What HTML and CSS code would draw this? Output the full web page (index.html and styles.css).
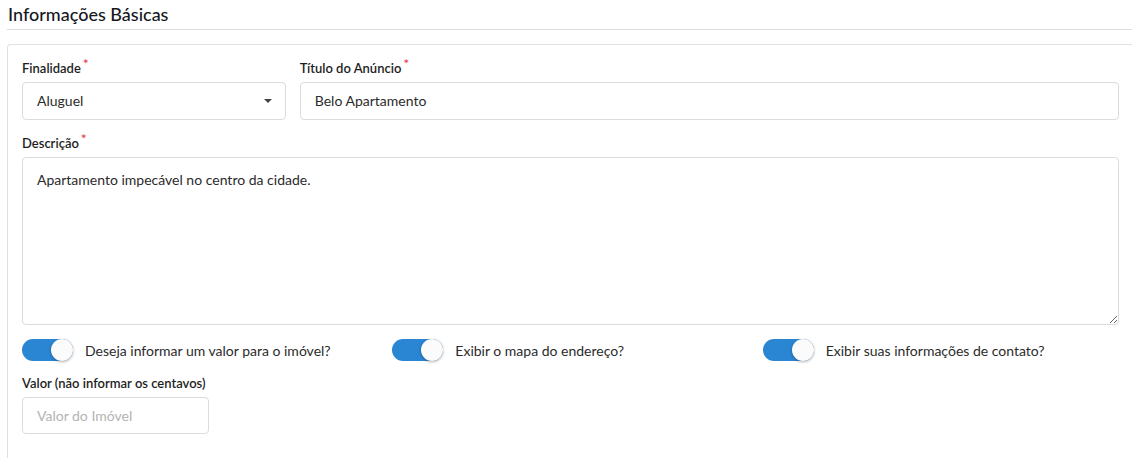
FILE: index.html
```html
<!DOCTYPE html>
<html lang="pt-BR">
<head>
<meta charset="utf-8">
<title>Informações Básicas</title>
<link rel="stylesheet" href="styles.css">
</head>
<body>
<div class="page">
  <h2 class="section-title">Informações Básicas</h2>
  <div class="card">
    <div class="row row-top">
      <div class="field">
        <label class="label">Finalidade<span class="req">*</span></label>
        <div class="control select">Aluguel<span class="caret"></span></div>
      </div>
      <div class="field">
        <label class="label">Título do Anúncio<span class="req">*</span></label>
        <div class="control">Belo Apartamento</div>
      </div>
    </div>
    <div class="field">
      <label class="label">Descrição<span class="req">*</span></label>
      <textarea class="control textarea" readonly>Apartamento impecável no centro da cidade.</textarea>
    </div>
    <div class="row row-toggles">
      <div class="toggle-item"><span class="switch"><span class="knob"></span></span><span class="toggle-text">Deseja informar um valor para o imóvel?</span></div>
      <div class="toggle-item"><span class="switch"><span class="knob"></span></span><span class="toggle-text">Exibir o mapa do endereço?</span></div>
      <div class="toggle-item"><span class="switch"><span class="knob"></span></span><span class="toggle-text">Exibir suas informações de contato?</span></div>
    </div>
    <div class="field field-last">
      <label class="label">Valor (não informar os centavos)</label>
      <div class="control small placeholder">Valor do Imóvel</div>
    </div>
  </div>
</div>
</body>
</html>
```

FILE: styles.css
```css
html, body {
  margin: 0;
  padding: 0;
  overflow: hidden;
  background: #fff;
}
body {
  font-family: Lato, "Open Sans", sans-serif;
  color: #333;
  width: 1132px;
  height: 458px;
}
.page {
  padding-left: 7px;
  width: 1127px;
}
.section-title {
  margin: 0;
  padding: 3px 0 4px 1px;
  font-size: 18px;
  line-height: 22px;
  font-weight: 500;
  color: #16181d;
  border-bottom: 1px solid #dedede;
}
.card {
  margin-top: 14px;
  border: 1px solid #e0e0e0;
  border-bottom: none;
  border-radius: 4px 4px 0 0;
  padding: 14px 14px 24px 14px;
}
.row {
  display: grid;
  column-gap: 14px;
}
.row-top {
  grid-template-columns: 263.75px 1fr;
}
.field {
  margin-bottom: 14px;
}
.field-last {
  margin-bottom: 0;
}
.label {
  display: block;
  font-size: 13px;
  line-height: 18px;
  font-weight: 600;
  color: #1e1e1e;
  margin-bottom: 5px;
}
.req {
  color: #e0354a;
  font-weight: 400;
  font-size: 14px;
  line-height: 14px;
  vertical-align: top;
  position: relative;
  top: -2px;
  margin-left: 2px;
}
.control {
  box-sizing: border-box;
  height: 38px;
  border: 1px solid #dcdcdc;
  border-radius: 4px;
  padding: 0 14px;
  font-family: Lato, "Open Sans", sans-serif;
  font-size: 14px;
  line-height: 36px;
  color: #2b2b2b;
  background: #fff;
}
.select {
  position: relative;
}
.caret {
  position: absolute;
  right: 13px;
  top: 16px;
  width: 0;
  height: 0;
  border-left: 4px solid transparent;
  border-right: 4px solid transparent;
  border-top: 4px solid #444;
}
.textarea {
  display: block;
  width: 100%;
  height: 168px;
  padding: 12px 14px;
  line-height: 20px;
  resize: vertical;
  outline: none;
  margin: 0;
}
.row-toggles {
  grid-template-columns: repeat(3, 1fr);
  margin-bottom: 13px;
}
.toggle-item {
  display: flex;
  align-items: center;
  height: 22px;
}
.switch {
  position: relative;
  width: 51px;
  height: 22px;
  border-radius: 11px;
  background: #2a85d2;
  flex: none;
}
.knob {
  position: absolute;
  right: 0;
  top: 0;
  width: 22px;
  height: 22px;
  border-radius: 50%;
  background: #fbfbfb;
  box-shadow: 0 1px 3px rgba(0,0,0,0.3);
}
.toggle-text {
  margin-left: 12px;
  font-size: 14px;
  color: #2b2b2b;
}
.small {
  width: 187px;
  height: 37px;
  line-height: 35px;
}
.placeholder {
  color: #b3b3b3;
}
```
